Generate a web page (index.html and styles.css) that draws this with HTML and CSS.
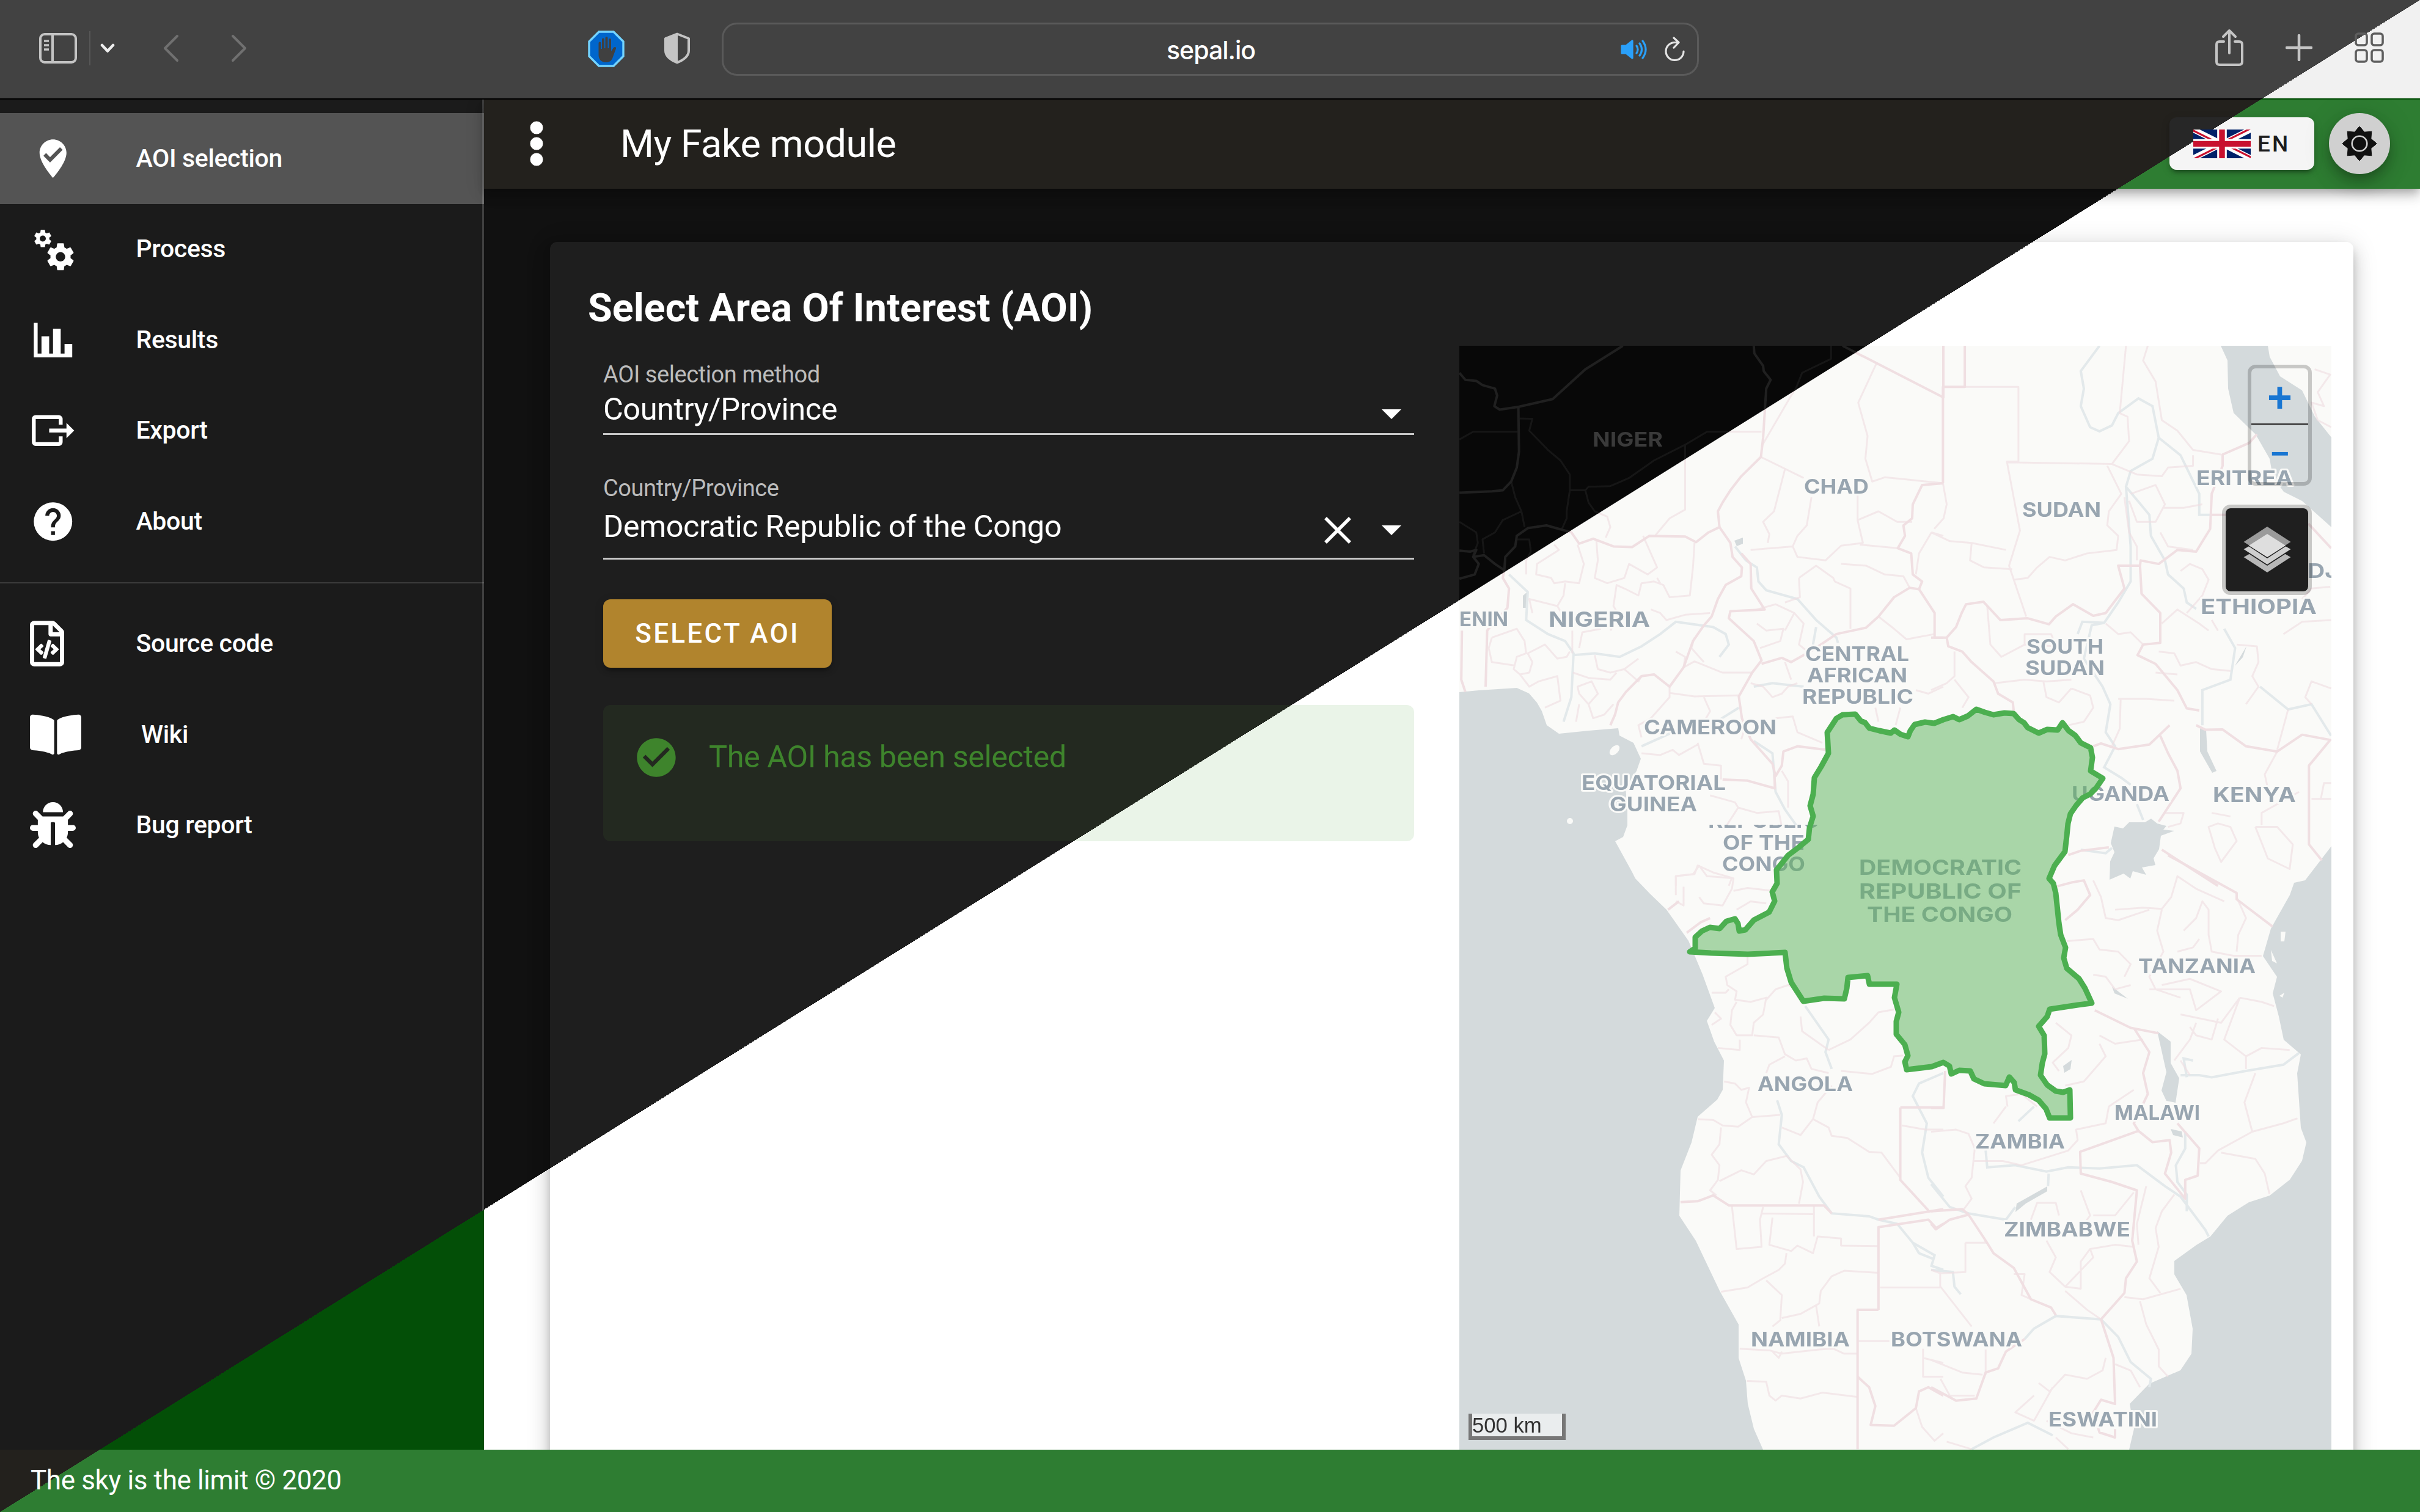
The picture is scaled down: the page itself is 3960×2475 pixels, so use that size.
FILE: index.html
```html
<!DOCTYPE html>
<html lang="en">
<head>
<meta charset="utf-8">
<title>My Fake module</title>
<link rel="stylesheet" href="styles.css">
</head>
<body>
<header class="browser">
  <div class="browser-side browser-left">
    <svg class="ico-sidebar" width="62" height="50" viewBox="0 0 62 50" fill="none" stroke="#c4c4c4" stroke-width="4"><rect x="2" y="2" width="58" height="46" rx="7"/><path d="M22 2V48"/><path d="M8 13H16M8 20H16M8 27H16" stroke-width="3.4"/></svg>
    <span class="vline"></span>
    <svg class="ico-chevron" width="24" height="16" viewBox="0 0 24 16" fill="none" stroke="#eee" stroke-width="4.5" stroke-linecap="round" stroke-linejoin="round"><path d="M3 3L12 12.5L21 3"/></svg>
    <svg class="ico-back" width="28" height="46" viewBox="0 0 28 46" fill="none" stroke="#707070" stroke-width="4" stroke-linecap="round" stroke-linejoin="round"><path d="M24 3L4 23L24 43"/></svg>
    <svg class="ico-forward" width="28" height="46" viewBox="0 0 28 46" fill="none" stroke="#707070" stroke-width="4" stroke-linecap="round" stroke-linejoin="round"><path d="M4 3L24 23L4 43"/></svg>
    <svg class="ico-stop" width="60" height="60" viewBox="0 0 60 60"><path d="M18 2H42L58 18V42L42 58H18L2 42V18Z" fill="#0066cc" stroke="#74d4ff" stroke-width="3.4"/><path d="M17.5 40V20.5a2 2 0 0 1 4 0V30h1.500V14.500a2 2 0 0 1 4 0V29h1.500V12a2 2 0 0 1 4 0V29H34V15a2 2 0 0 1 4 0V34l4-6c2-2 5-1 4 1.500L41 43c-2 7-6 9-12 9-7 0-11.500-5-11.500-12Z" fill="#404040"/></svg>
    <svg class="ico-shield" width="44" height="52" viewBox="0 0 44 52"><path d="M22 2.500L41 10V30C41 39 33 45 22 49.500C11 45 3 39 3 30V10Z" fill="none" stroke="#c4c4c4" stroke-width="4" stroke-linejoin="round"/><path d="M23 2L3 10V30C3 39 11 45 23 50Z" fill="#c4c4c4"/></svg>
  </div>
  <div class="url">
    <span class="url-text">sepal.io</span>
    <span class="url-icons">
      <svg width="44" height="36" viewBox="0 0 44 36" fill="none" stroke="#2aa0fa" stroke-width="3.2" stroke-linecap="round"><path d="M3 12H10L20 4V32L10 24H3Z" fill="#2aa0fa" stroke-linejoin="round"/><path d="M27 12q4 6 0 12M32 8q7 10 0 20M37 4q10 14 0 28"/></svg>
      <svg width="34" height="42" viewBox="0 0 34 42" fill="none" stroke="#e4e4e4" stroke-width="3.2" stroke-linecap="round" stroke-linejoin="round"><path d="M31 24A14.500 14.500 0 1 1 17 9.500H22M15 2L23 9.500L15 18"/></svg>
    </span>
  </div>
  <div class="browser-side browser-right">
    <svg width="46" height="62" viewBox="0 0 46 62" fill="none" stroke="#c4c4c4" stroke-width="4" stroke-linecap="round" stroke-linejoin="round"><path d="M14 21H7Q2 21 2 26V54Q2 59 7 59H39Q44 59 44 54V26Q44 21 39 21H32M23 40V4M13 13L23 3L33 13"/></svg>
    <svg width="44" height="44" viewBox="0 0 44 44" stroke="#c4c4c4" stroke-width="4.5" stroke-linecap="round"><path d="M22 2V42M2 22H42"/></svg>
    <svg width="48" height="50" viewBox="0 0 48 50" fill="none" stroke-width="3.6"><defs><clipPath id="grid-dark"><path d="M-200 153.500L108 -54V-400H-400Z" transform="translate(-55 0)"/></clipPath><g id="grid-ico"><rect x="2" y="2" width="18" height="19" rx="4"/><rect x="28" y="2" width="18" height="19" rx="4"/><rect x="2" y="29" width="18" height="19" rx="4"/><rect x="28" y="29" width="18" height="19" rx="4"/></g></defs><use href="#grid-ico" stroke="#5e5e5e"/><use href="#grid-ico" stroke="#c4c4c4" clip-path="url(#grid-dark)"/></svg>
  </div>
</header>

<nav class="drawer">
  <ul class="nav-list">
    <li class="nav-item active"><svg class="mdi" viewBox="0 0 24 24"><path d="M12,2C15.860,2 19,5.140 19,9C19,14.250 12,22 12,22C12,22 5,14.250 5,9C5,5.140 8.140,2 12,2M10.470,14L17,7.410L15.600,6L10.470,11.180L8.400,9.090L7,10.500L10.470,14Z"/></svg><span>AOI selection</span></li>
    <li class="nav-item"><svg class="mdi" viewBox="0 0 24 24"><path d="M15.900,18.450C17.250,18.450 18.350,17.350 18.350,16C18.350,14.650 17.250,13.550 15.900,13.550C14.540,13.550 13.450,14.650 13.450,16C13.450,17.350 14.540,18.450 15.900,18.450M21.100,16.680L22.580,17.840C22.710,17.950 22.750,18.130 22.660,18.290L21.260,20.710C21.170,20.860 21,20.920 20.830,20.860L19.090,20.160C18.730,20.440 18.330,20.670 17.910,20.850L17.640,22.700C17.620,22.870 17.470,23 17.300,23H14.500C14.320,23 14.180,22.870 14.150,22.700L13.890,20.850C13.460,20.670 13.070,20.440 12.710,20.160L10.960,20.860C10.810,20.920 10.620,20.860 10.540,20.710L9.140,18.290C9.050,18.130 9.090,17.950 9.220,17.840L10.700,16.680L10.650,16L10.700,15.310L9.220,14.160C9.090,14.050 9.050,13.860 9.140,13.710L10.540,11.290C10.620,11.130 10.810,11.070 10.960,11.130L12.710,11.840C13.070,11.560 13.460,11.320 13.890,11.150L14.150,9.290C14.180,9.130 14.320,9 14.500,9H17.300C17.470,9 17.620,9.130 17.640,9.290L17.910,11.150C18.330,11.320 18.730,11.560 19.090,11.840L20.830,11.130C21,11.070 21.170,11.130 21.260,11.290L22.660,13.710C22.750,13.860 22.710,14.050 22.580,14.160L21.100,15.310L21.150,16L21.100,16.680M6.690,8.070C7.560,8.070 8.260,7.370 8.260,6.500C8.260,5.630 7.560,4.920 6.690,4.920A1.580,1.580 0 0,0 5.110,6.500C5.110,7.370 5.820,8.070 6.690,8.070M10.030,6.940L11,7.680C11.070,7.750 11.090,7.870 11.030,7.970L10.130,9.530C10.080,9.630 9.960,9.670 9.860,9.630L8.740,9.180L8,9.620L7.810,10.810C7.790,10.920 7.700,11 7.590,11H5.790C5.670,11 5.580,10.920 5.560,10.810L5.400,9.620L4.640,9.180L3.520,9.630C3.410,9.670 3.300,9.630 3.240,9.530L2.340,7.970C2.280,7.870 2.310,7.750 2.390,7.680L3.340,6.940L3.310,6.500L3.340,6.060L2.390,5.320C2.310,5.250 2.280,5.130 2.340,5.030L3.240,3.470C3.300,3.370 3.410,3.330 3.520,3.380L4.630,3.820L5.400,3.380L5.560,2.190C5.580,2.080 5.670,2 5.790,2H7.590C7.700,2 7.790,2.080 7.810,2.190L8,3.380L8.740,3.820L9.860,3.380C9.960,3.330 10.080,3.370 10.130,3.470L11.030,5.030C11.090,5.130 11.070,5.250 11,5.320L10.030,6.060L10.060,6.500L10.030,6.940Z"/></svg><span>Process</span></li>
    <li class="nav-item"><svg class="mdi" viewBox="0 0 24 24"><path d="M22,21H2V3H4V19H6V10H10V19H12V6H16V19H18V14H22V21Z"/></svg><span>Results</span></li>
    <li class="nav-item"><svg class="mdi" viewBox="0 0 24 24"><path d="M23,12L19,8V11H10V13H19V16M1,18V6C1,4.890 1.900,4 3,4H15A2,2 0 0,1 17,6V9H15V6H3V18H15V15H17V18A2,2 0 0,1 15,20H3A2,2 0 0,1 1,18Z"/></svg><span>Export</span></li>
    <li class="nav-item"><svg class="mdi" viewBox="0 0 24 24"><path d="M15.070,11.250L14.170,12.170C13.450,12.890 13,13.500 13,15H11V14.500C11,13.390 11.450,12.390 12.170,11.670L13.410,10.410C13.780,10.050 14,9.550 14,9C14,7.890 13.100,7 12,7A2,2 0 0,0 10,9H8A4,4 0 0,1 12,5A4,4 0 0,1 16,9C16,9.880 15.640,10.670 15.070,11.250M13,19H11V17H13M12,2A10,10 0 0,0 2,12A10,10 0 0,0 12,22A10,10 0 0,0 22,12C22,6.470 17.500,2 12,2Z"/></svg><span>About</span></li>
  </ul>
  <ul class="nav-list nav-links">
    <li class="nav-item"><span class="fa-slot"><svg class="fa" width="56" height="75" viewBox="0 0 384 512"><path d="M149.900 349.100l-.2-.2-32.800-28.900 32.800-28.900c3.600-3.200 4-8.800.8-12.400l-.2-.2-17.400-18.600c-3.400-3.600-9-3.700-12.400-.4l-57.700 54.100c-3.700 3.500-3.700 9.400 0 12.800l57.700 54.100c1.600 1.500 3.800 2.400 6 2.400 2.400 0 4.800-1 6.400-2.800l17.400-18.600c3.300-3.500 3.100-9.100-.4-12.400zm220-251.200L286 14C277 5 264.800-.1 252.100-.1H48C21.500 0 0 21.500 0 48v416c0 26.500 21.500 48 48 48h288c26.500 0 48-21.500 48-48V131.900c0-12.700-5.100-25-14.100-34zM256 51.900l76.100 76.100H256zM336 464H48V48h160v104c0 13.300 10.700 24 24 24h104zM209.600 214c-4.700-1.400-9.500 1.300-10.900 6L144 408.100c-1.400 4.700 1.300 9.600 6 10.900l24.400 7.100c4.700 1.400 9.600-1.400 10.900-6L240 231.900c1.400-4.700-1.300-9.600-6-10.900zm24.500 76.900l.2.2 32.800 28.900-32.800 28.900c-3.600 3.200-4 8.800-.8 12.400l.2.2 17.400 18.600c3.300 3.500 8.900 3.700 12.400.4l57.700-54.100c3.700-3.500 3.700-9.400 0-12.800l-57.700-54.100c-3.500-3.300-9.100-3.200-12.400.4l-17.400 18.600c-3.300 3.500-3.100 9.100.4 12.400z"/></svg></span><span>Source code</span></li>
    <li class="nav-item"><span class="fa-slot"><svg class="fa" width="84" height="75" viewBox="0 0 576 512"><path d="M542.220 32.050c-54.800 3.110-163.720 14.430-230.960 55.590-4.640 2.840-7.270 7.890-7.270 13.170v363.870c0 11.550 12.630 18.850 23.280 13.490 69.180-34.820 169.230-44.320 218.700-46.920 16.890-.89 30.020-14.430 30.020-30.660V62.750c.01-17.710-15.350-31.740-33.770-30.700zM264.730 87.640C197.500 46.480 88.580 35.170 33.780 32.050 15.360 31.010 0 45.040 0 62.750V400.600c0 16.240 13.130 29.780 30.020 30.660 49.490 2.600 149.590 12.110 218.770 46.950 10.620 5.350 23.210-1.940 23.210-13.460V100.630c0-5.290-2.620-10.140-7.270-12.990z"/></svg></span><span>Wiki</span></li>
    <li class="nav-item"><span class="fa-slot"><svg class="fa" width="75" height="75" viewBox="0 0 512 512"><path d="M511.988 288.900c-.478 17.430-15.217 31.100-32.653 31.100H424v16c0 21.864-4.882 42.584-13.600 61.145l60.228 60.228c12.496 12.497 12.496 32.758 0 45.255-12.498 12.497-32.759 12.496-45.256 0l-54.736-54.736C345.886 467.965 314.351 480 280 480V236c0-6.627-5.373-12-12-12h-24c-6.627 0-12 5.373-12 12v244c-34.351 0-65.886-12.035-90.636-32.108l-54.736 54.736c-12.498 12.497-32.759 12.496-45.256 0-12.496-12.497-12.496-32.758 0-45.255l60.228-60.228C92.882 378.584 88 357.864 88 336v-16H32.666C15.230 320 .491 306.330.013 288.900-.484 270.816 14.028 256 32 256h56v-58.745l-46.628-46.628c-12.496-12.497-12.496-32.758 0-45.255 12.498-12.497 32.758-12.497 45.256 0L141.255 160h229.489l54.627-54.627c12.498-12.497 32.758-12.497 45.256 0 12.496 12.497 12.496 32.758 0 45.255L424 197.255V256h56c17.972 0 32.484 14.816 31.988 32.900zM257 0c-61.856 0-112 50.144-112 112h224C369 50.144 318.856 0 257 0z"/></svg></span><span>Bug report</span></li>
  </ul>
</nav>

<div class="appbar">
  <svg class="dots" width="76" height="76" viewBox="0 0 76 76" fill="#fff"><circle cx="38" cy="12" r="10.5"/><circle cx="38" cy="38" r="10.5"/><circle cx="38" cy="64" r="10.5"/></svg>
  <h1 class="app-title">My Fake module</h1>
  <div class="lang">
    <svg width="94" height="47" viewBox="0 0 60 30"><defs><clipPath id="flag-t"><path d="M30,15H60V30ZV30H0ZH0V0ZV0H60Z"/></clipPath></defs><path d="M0,0V30H60V0Z" fill="#012169"/><path d="M0,0L60,30M60,0L0,30" stroke="#fff" stroke-width="6"/><path d="M0,0L60,30M60,0L0,30" clip-path="url(#flag-t)" stroke="#c8102e" stroke-width="4"/><path d="M30,0V30M0,15H60" stroke="#fff" stroke-width="10"/><path d="M30,0V30M0,15H60" stroke="#c8102e" stroke-width="6"/></svg>
    <span class="lang-text">EN</span>
  </div>
  <button class="theme" aria-label="Theme"><svg width="58" height="58" viewBox="-29 -29 58 58"><path d="M0-28Q1.500-27 7.800-18.800L19.800-19.800L18.800-7.800Q27-1.500 28 0Q27 1.500 18.800 7.800L19.800 19.800L7.800 18.800Q1.500 27 0 28Q-1.500 27-7.800 18.800L-19.800 19.800L-18.800 7.800Q-27 1.500-28 0Q-27-1.500-18.800-7.800L-19.800-19.800L-7.800-18.800Q-1.500-27 0-28Z" fill="#111" stroke="#111" stroke-linejoin="round"/><circle r="12.3" fill="none" stroke="#d0d0d0" stroke-width="2.6"/></svg></button>
</div>

<main class="content">
  <section class="card">
    <h2 class="card-title">Select Area Of Interest (AOI)</h2>
    <div class="card-body">
      <div class="form">
        <div class="field">
          <label class="field-label">AOI selection method</label>
          <div class="field-row row-a"><span class="field-value">Country/Province</span><svg class="caret" width="32" height="16" viewBox="0 0 32 16"><path d="M0 0H32L16 16Z" fill="#fff"/></svg></div>
        </div>
        <div class="field field-b">
          <label class="field-label">Country/Province</label>
          <div class="field-row row-b"><span class="field-value">Democratic Republic of the Congo</span><svg class="clear" width="44" height="44" viewBox="0 0 44 44" stroke="#fff" stroke-width="5.5"><path d="M2 2L42 42M42 2L2 42"/></svg><svg class="caret" width="32" height="16" viewBox="0 0 32 16"><path d="M0 0H32L16 16Z" fill="#fff"/></svg></div>
        </div>
        <button class="select-btn">SELECT AOI</button>
        <div class="alert"><svg width="76" height="76" viewBox="0 0 24 24" fill="#3e842c"><path d="M12 2C6.500 2 2 6.500 2 12S6.500 22 12 22 22 17.500 22 12 17.500 2 12 2M10 17L5 12L6.410 10.590L10 14.170L17.590 6.580L19 8L10 17Z"/></svg><span class="alert-text">The AOI has been selected</span></div>
      </div>
      <div class="map">
        <svg class="map-svg" viewBox="2388 566 1427 1807" width="1427" height="1807">
          <defs>
            <clipPath id="dark-half"><path d="M3960 0H0V2475Z"/></clipPath>
            <clipPath id="tile-edge"><path d="M2780 1350H3000V1370H2780Z"/></clipPath>
            <g id="borders" fill="none" stroke-linejoin="round">
              <g class="country">
                <g transform="translate(2380 550) scale(.5102 .574)">
                  <path d="M16 105L35 125L70 128L90 140L130 150L137 170L128 200L145 210L205 202L315 180L420 95L540 28"/>
                  <path d="M205 202L207 330L200 375L182 415L155 440L120 443L16 447"/>
                  <path d="M960 28L962 50L990 85L992 100L1014 125L1000 150L990 290L983 345L920 400L885 440L860 475L845 500L850 545L815 560L775 588L740 572L625 570L570 602L510 600L445 578L400 592L375 560L335 550L295 540L235 548L200 570L195 600L163 630L160 668L130 650L95 625L60 630L70 610L50 615L16 612M60 630L78 650L65 680L16 692"/>
                  <path d="M160 668L155 690L175 720L170 775L150 795M140 800L105 840L100 1000M24 840L22 980L35 1015"/>
                  <path d="M850 545L885 590L892 630L922 660L920 685L870 710L845 750L825 800L800 825L765 870L735 945L690 1000L640 965L600 970L550 1015L525 1045L515 1080L500 1110"/>
                  <path d="M920 620L950 650L952 720L995 780L885 785L880 805L960 870L985 925L955 960L912 1028L922 1090L950 1150L1020 1220L1030 1255L1050 1225L1055 1185L1100 1170L1190 1180"/>
                  <path d="M985 935L1050 918L1080 930L1150 895L1225 850L1320 832L1360 800L1410 745L1460 718L1490 722L1540 790L1540 860L1568 860M1490 722L1500 700L1470 680L1465 620L1422 605L1445 570L1440 540L1468 520L1470 480L1500 425L1568 420"/>
                  <path d="M1245 28L1568 175L1568 28M860 1265L940 1268L1028 1290L1026 1250"/>
                </g>
                <g transform="translate(3160 550) scale(.5102 .574)">
                  <path d="M108 28V145H38V420M0 860H50L80 830L98 790L112 765L168 758L222 810L310 805M50 860L55 885L100 900L130 930L200 985L215 1020L262 1045L265 1070M310 805L378 822L400 800L455 765L520 798L560 790L620 720L600 655H670L675 735L735 790V875L680 880L662 910L720 935L790 1010L820 1062L860 1068"/>
                  <path d="M670 655L672 640L730 650L790 610L850 615L895 550L900 450L935 370L935 338L1020 305L1045 280M895 510H960M735 840V875M850 1110L880 1123L935 1122L1010 1170L1110 1185L1190 1137L1280 1152L1212 1225V1450L1253 1495M520 1170L545 1162L600 1178L700 1165L765 1110M735 1140L760 1190L790 1240L800 1290L730 1385M740 1465L920 1568M440 1480L480 1468L570 1458M1283 605L1210 535"/>
                </g>
                <g transform="translate(2380 1400) scale(.5102 .6856)">
                  <path d="M725 828L780 826L830 812L880 836H1185L1210 855M1360 1085V888L1520 870L1545 890L1568 880M1360 870L1568 845M1360 1085H1293V1418M1293 1245L1330 1270L1350 1315L1335 1360L1410 1362L1480 1320L1490 1280L1520 1270L1568 1290M1430 602V775L1520 848M1430 602H1568M745 185L790 160L820 150M685 130L720 110"/>
                </g>
                <g transform="translate(3160 1400) scale(.5102 .6856)">
                  <path d="M0 603H40L45 515M0 850L100 845L120 858L175 920L200 950L265 985L320 1060L385 1080L400 1098M0 880L15 893L60 870L120 858M545 1108L620 1045L625 1010L660 970L645 920L660 800L580 780L480 760L478 708L665 658L710 685L765 680L770 710L750 760L815 820V775L855 765L860 700L790 640M545 1108L585 1200L590 1310L545 1300L520 1330L540 1378L590 1390V1370M525 370L640 412L730 425M650 412L700 470L680 520L695 570L650 640L665 658M760 0L980 90V105L1095 170M0 1270L80 1302L145 1297L175 1235L215 1225L240 1185L300 1155M430 155L470 130L510 95L490 60L450 65L400 75"/>
                </g>
              </g>
              <g class="province">
                <g transform="translate(2380 550) scale(.5102 .574)">
                  <path d="M16 295L60 273H203M207 235L250 236L240 270L300 325L340 355L370 395V440L360 500V520L345 550M370 440H420L430 430L500 428L560 405L640 355L740 310L810 273H985M420 440L430 475L450 500L490 515L500 545L485 575M740 310V495L690 520L645 568M182 415L195 460L215 500L225 545M215 500L155 525L130 560L90 580L95 620M16 530L70 560L75 590L60 625M200 580H240L245 615L230 640V680M1208 28V65L1115 105L1095 150L1080 170L985 315M1355 75L1295 190L1325 285L1318 350L1340 415L1380 403L1440 408L1568 420M983 345L1120 405M1060 380L1025 500L990 530L1010 565L1005 590M1145 460L1130 540L1100 570L1085 600L950 610M1293 455V525L1360 500L1420 530L1468 530M1293 525L1310 590L1240 598L1190 640L1100 630L1085 600M1300 595L1420 605"/>
                  <path d="M320 595L335 610L265 650L262 680L310 690L320 705L355 700L400 705L415 650L395 595M455 580L460 640L450 690L490 705L545 690L560 650L620 680L650 660L620 600L605 570M770 590L765 660L755 740L690 745L670 710L640 700L600 705L590 740L545 720L520 710L510 770L530 800L500 840M355 705L350 740L330 770L350 800L370 790M250 790L240 750L330 770M650 690L660 705M630 780L660 790L680 810L740 795L820 790M120 860L200 835L225 870L230 905L200 915L190 950L210 965L240 960L250 930L235 905L290 880L330 920L360 915L370 900M120 860L110 890L120 930L195 940M378 840V905M400 890L410 845L470 835M450 910L460 950L500 960L545 950L590 920M545 950L590 985L600 970M710 900L740 915L735 945M210 965L240 1000L270 985L330 970L340 1040L290 1060M380 960L430 975L500 980L520 960M395 1000L440 985L460 1020L430 1050L400 1020ZM400 1050L390 1100M430 1050L445 1090L480 1080L510 1050M690 1000V1030L630 1090L590 1110L600 1145M690 1018L770 1028L912 1025M800 1030L820 1070L800 1100M735 945L770 928L860 960L955 960M770 860L760 890L800 930M600 1190L660 1195L700 1180L720 1195L780 1165M780 1160L800 1220L855 1225V1265"/>
                  <path d="M970 780L1030 765L1090 790L1120 820L1105 880L1140 905M1105 690L1108 745L1060 760M1105 690L1160 655L1215 690L1220 700L1270 720V835M1240 650L1320 655L1380 680L1440 685L1460 718M970 820L1000 840L1055 835L1045 870L980 890M1090 790L1060 840M1360 800L1410 835L1450 865L1540 850M950 990L990 1000L1020 1030L1050 1020L1070 1000L1100 990M1060 930L1080 980M940 1095L920 1150M1030 1090L1085 1085L1100 1130L1180 1160M1050 1240L1070 1270V1345M820 1310L860 1320L900 1330L910 1345L870 1400M910 1345L970 1360L1040 1355L1050 1400M710 1568V1540L770 1535L780 1510L830 1530L890 1545L880 1568M1360 1100L1350 1060M1415 1110L1430 1060M1480 1010L1520 1020L1568 1000M1530 560L1490 620L1480 680M1530 560L1568 570"/>
                </g>
                <g transform="translate(3160 550) scale(.5102 .574)">
                  <path d="M108 145H280V358H243L285 555L250 655L305 800M243 360L580 365L635 300L630 230L605 220L625 28M565 370L610 450L570 500L565 540L600 570L595 610L500 620L430 640L380 630L340 660L310 690L265 695M0 560L60 585L130 590L240 610M38 420L50 480L40 520L10 550M130 590L125 640L170 660L260 665M695 28L680 70L720 130L740 240L790 270L840 325L930 338M840 340V370L760 375L740 400L660 395L580 365M640 450L720 425L750 480L720 530H660L635 470M745 490L810 490L870 480M735 560L760 600L840 610M620 460L635 560L660 600V640M800 670L830 650L870 665L890 695L870 740L820 790M740 820L790 780L860 820L890 840M900 810L920 840M1280 715L1220 720L1190 750M1130 850L1190 815L1283 810M730 900L780 905L800 940L850 930L900 950L960 955M720 960L790 965M980 880L1045 885L1050 930L1030 970L1050 1000L1010 1050M1283 1005L1220 985L1200 1030L1220 1050M1145 1065L1110 1180M1110 1185L1070 1250L1080 1290M600 1035H690L780 1040M608 1035L605 1120L580 1170M450 1005L510 1025L520 1060L490 1100L440 1110M205 990L300 980L370 985L450 980M360 985L370 1030L410 1045L450 1005M180 770L190 880L225 915L300 880L400 885L385 850L300 850V880M560 820L600 850L640 845L680 880M0 1010L50 990L75 970V900M75 980L120 1030L100 1060M1040 1400L1080 1490L1150 1520L1160 1450L1110 1400H1040M1060 1395V1360L1120 1330L1180 1300M1220 1320H1283M1250 1320L1260 1275H1283M890 1400L910 1460L930 1500L980 1440L960 1400L920 1390ZM750 1360L810 1360L800 1390L760 1400M900 1360L960 1370M1230 95L1280 110L1240 160L1260 200L1220 190L1240 240L1283 260"/>
                </g>
                <g transform="translate(2380 1400) scale(.5102 .6856)">
                  <path d="M940 240L940 260L870 290L875 310L905 325L900 345L950 350L1000 340L990 380L960 400L955 430L905 430L885 405L890 370L905 350M825 328H870L880 320M835 375L855 390L825 405M1000 345L1030 320L1070 310L1090 315M960 430L1040 435L1060 475L1095 490L1130 485L1145 510L1200 520M845 460L915 465V440M1060 480L1010 500L1000 520M865 540L900 545L920 560L945 555L935 590L955 625L1045 620M780 630L830 632L860 645L910 648L955 625M855 650L850 690L825 715L850 740L845 775L820 800L840 812M850 778L920 752L960 762L1000 730L1065 718L1110 750L1118 780L1105 832M1050 650L1110 668L1150 630L1165 590L1210 550M1150 630L1200 650L1210 670L1260 675L1330 708L1370 710L1430 770M1200 465L1270 440L1330 400L1360 375L1412 368M1110 385L1115 420L1200 465M1240 515L1340 522L1400 505L1410 480L1440 478M1435 645L1510 655L1568 655M890 838L905 940L985 935L980 870L990 840M985 855L1150 857M1020 865L1010 930L1080 945L1100 932L1150 950L1165 910L1240 915V932L1360 933M1153 838V910M1065 950L1060 975L1040 990L990 1010L940 1032L855 1042M1000 1015L1050 1050L1045 1110L1020 1125M1050 1105L1110 1095L1170 1070L1175 1040L1210 1005L1250 992L1360 997M1160 1075L1170 1125M1365 1032H1558V995M915 1178L1010 1182L1050 1190L1170 1180L1215 1178L1250 1190H1290M938 1255L1000 1257L1010 1290L1030 1302L1050 1290L1110 1297L1180 1283L1290 1293M1295 1160H1395M1503 1178V1245H1568M1503 1200L1568 1212M1480 1320L1500 1365L1540 1398L1568 1380M710 95V50L765 45L785 25L810 50L850 52L895 55L890 80L860 120L800 115L785 100M735 75V120L710 110M895 85L940 78L1020 85M905 130L950 110L1000 115M1020 1185L1040 1200L1050 1185"/>
                </g>
                <g transform="translate(3160 1400) scale(.5102 .6856)">
                  <path d="M0 660L80 655L120 665L140 700L130 770L110 790L130 820L105 845M135 730H230L290 740L440 705L470 680L465 655L560 640L570 600L650 560M245 600L240 575L290 570L340 600M110 925H180L170 920M110 925V995L30 998L0 990M30 1030L130 1125M520 285L560 290L590 320L640 310M435 205L520 200L540 225L600 230L640 260L620 290M520 60L545 100L560 150L600 155L700 130M590 130L680 125L740 128L770 100L790 50L850 80L940 110M740 130L725 180L745 230L700 290L720 320L800 340M810 180L850 150L870 110L890 130L890 190L900 230L970 240L1060 240M980 100L1010 150L985 190L980 230M860 200L840 220L790 230M700 320H830L850 370L930 325L830 295L740 310M990 340L1060 350L1100 360M990 340L940 440L1010 480L1060 460L1150 465M1010 480V510M780 490L830 440L850 400M920 390L900 440L850 430L830 410M800 380L930 400L990 340M540 430L590 450L680 440M540 450L560 480L490 540L430 550M400 400L450 430L440 460L390 495L410 515M1040 520L1005 590L1030 660L920 705L880 735H862M1030 660L1130 640L1175 628M930 710L1040 725L1070 760L1085 808M780 810L740 850L720 890L730 935L700 1010L735 1045M690 790L660 880L665 930M800 1035L680 1060L620 1055M670 1065L690 1120L730 1180V1220L760 1245M510 940L520 960L430 1030M370 920L400 960L380 995L430 1030L480 1035V970L510 940L590 930L650 935M430 1040L500 1085L545 1108M480 800L510 860L490 880M520 860L590 860L650 805M320 870L340 830L400 830L410 860M265 1000H300L290 1050L320 1060M0 1205L100 1235L165 1240M30 1250L60 1290L140 1290M345 1260L380 1280L430 1240L500 1250L550 1230L560 1200M330 1290L270 1330L330 1350L390 1270M370 1350L450 1380L520 1390M590 1215L640 1230L670 1270M800 490L830 525M240 600L200 640M50 1400L130 1418M400 1390L440 1418M175 1180V1240"/>
                </g>
              </g>
            </g>
            <g id="drc-shape"><path d="M3005 1176L3015 1170L3036 1169L3045 1180L3052 1183L3059 1192L3075 1196L3094 1200L3100 1195L3110 1202L3122 1206L3126 1196L3133 1186L3150 1182L3165 1184L3180 1178L3196 1173L3206 1178L3220 1172L3234 1161L3248 1166L3262 1170L3280 1167L3295 1168L3304 1178L3312 1183L3318 1191L3336 1200L3350 1194L3367 1195L3375 1183L3385 1196L3396 1204L3405 1216L3421 1224L3424 1240L3421 1262L3441 1274L3430 1290L3420 1300L3408 1306L3397 1319L3388 1332L3384 1348L3382 1368L3379 1394L3362 1417L3353 1438L3360 1446L3364 1462L3369 1510L3372 1530L3380 1551L3377 1568L3382 1585L3402 1602L3412 1618L3423 1642L3400 1645L3354 1652L3350 1664L3336 1680L3345 1695L3346 1725L3342 1740L3339 1760L3350 1776L3364 1786L3376 1788L3387 1784L3388 1830L3354 1830L3348 1815L3336 1801L3320 1792L3298 1784L3296 1772L3288 1763L3282 1777L3247 1774L3230 1766L3224 1753L3206 1752L3193 1758L3190 1745L3180 1739L3161 1746L3120 1751L3117 1738L3122 1728L3117 1710L3103 1693L3103 1672L3107 1657L3100 1633L3104 1611L3059 1611L3056 1597L3024 1600L3022 1618L3018 1635L2985 1634L2951 1639L2940 1622L2931 1608L2924 1585L2921 1559L2860 1562L2800 1560L2765 1558L2774 1552L2774 1534L2785 1524L2798 1518L2814 1520L2825 1508L2839 1504L2844 1512L2846 1524L2856 1522L2870 1506L2895 1493L2904 1475L2900 1460L2908 1446L2907 1424L2926 1400L2942 1388L2959 1374L2961 1355L2967 1336L2962 1319L2967 1300L2969 1273L2980 1255L2992 1233L2990 1199Z"/></g>
          </defs>
          <rect x="2388" y="566" width="1427" height="1807" fill="#fafaf8"/>
          <g class="water">
            <path d="M2388 1133L2420 1130L2482 1126L2502 1135L2515 1150L2523 1164L2531 1187L2551 1201L2600 1196L2648 1192L2650 1204L2673 1216L2685 1242L2678 1262L2660 1290L2663 1320L2663 1351L2656 1370L2643 1377L2671 1428L2676 1438L2700 1463L2727 1489L2763 1540L2786 1595L2806 1650L2793 1671L2805 1705L2821 1736L2819 1784L2810 1800L2778 1828L2768 1870L2750 1916L2748 1990L2775 2031L2814 2113L2845 2168V2223L2857 2260L2860 2298L2870 2339L2885 2373H2388Z"/>
            <path d="M3484 2373L3492 2339L3485 2298L3517 2265L3568 2243L3586 2216L3588 2175L3578 2120L3558 2086V2064L3594 2038L3617 2024L3645 1990L3680 1968L3714 1957L3747 1931L3767 1900L3774 1870L3765 1846L3759 1757L3765 1726L3737 1702L3729 1664L3719 1626L3726 1599L3703 1565L3716 1520L3747 1465L3754 1445L3772 1441L3815 1385V2373Z"/>
            <path d="M3634 566L3645 590L3646 636L3655 676L3691 711L3714 751L3719 780L3737 805L3767 820L3815 863V716L3788 682L3767 639L3731 616L3714 584L3711 566Z"/>
            <path d="M3460 1353L3474 1356L3484 1346L3510 1346L3520 1340L3530 1348L3545 1352L3540 1358L3558 1360L3536 1368L3533 1390L3524 1405L3527 1416L3505 1420L3512 1432L3490 1426L3486 1438L3475 1430L3452 1440L3453 1410L3460 1395L3454 1380Z"/>
            <path d="M3530 1688L3552 1705L3552 1740L3566 1765L3560 1805L3545 1802L3537 1785L3545 1755Z"/>
            <path d="M3600 1190L3610 1195L3612 1230L3627 1262L3620 1265L3600 1230Z"/>
            <path d="M2838 885L2852 880L2852 890L2842 894ZM3376 1745L3390 1735L3388 1750L3378 1756ZM3300 1970L3350 1942V1950L3315 1970L3298 1984ZM3552 1848L3570 1852L3572 1862L3556 1858ZM3456 1615L3482 1635L3460 1626ZM3657 1090L3676 1058L3670 1076ZM2492 975L2498 970V995H2492Z"/>
          </g>
          <g fill="#fafaf8"><ellipse cx="2642" cy="1228" rx="10" ry="6" transform="rotate(-45 2642 1228)"/><circle cx="2569" cy="1344" r="5"/><path d="M3732 1525h8l-2 16h-6zM3716 1555l10 22-8-4zM3730 1630l8-5-3 8z"/></g>
          <g class="rivers" fill="none">
            <g transform="translate(2380 550) scale(.5102 .574)"><path d="M175 680L235 730L230 810L300 850L355 870L382 905L375 1030L350 1100M382 910L450 905L530 915L600 885L660 850L710 815L830 830L870 850L880 880L850 915M900 600L935 640L970 660L975 700L1000 725L1100 750L1160 810L1225 860L1230 875M1160 830L1150 880M600 1170L700 1130M912 1060L840 1100M960 1000L1020 990L1120 1000M960 1155L1020 1190L1030 1300L1060 1350L1100 1400"/></g>
            <g transform="translate(3160 550) scale(.5102 .574)"><path d="M540 28L480 100L490 150L480 200L510 260L540 272L580 255L600 220L665 178L710 200L730 290L710 350L640 385L625 430L640 600V700L600 760L555 818L485 815L470 850M625 430L700 510L705 570L750 640L760 680L810 720L820 760L850 778M730 290L800 340L860 450V510H895M555 818L515 825L490 920L550 1000L575 1050L560 1130L590 1170L555 1230L610 1260L640 1280M940 835L975 890L960 980L870 1010V1110M1055 1000L1145 1065L1220 1050L1283 1140M660 1335L680 1380M480 1465L560 1475L580 1460"/></g>
            <g transform="translate(2380 1400) scale(.5102 .6856)"><path d="M1125 360L1200 440L1190 470L1210 510M1035 585L1050 620L1040 690L1080 730L1120 745L1170 815L1210 855L1330 862L1360 870L1420 880L1470 925L1540 955L1530 980L1568 990M1470 925L1490 950L1540 965M1568 520L1490 545L1470 575L1515 640L1500 710L1520 770L1568 815"/></g>
            <g transform="translate(3160 1400) scale(.5102 .6856)"><path d="M175 705L180 745L270 740L370 755L440 745L540 748L660 740L750 790L800 815L880 895L890 910M377 760L375 790M0 785L60 840L120 855L240 870L270 840M815 660V700L785 740L790 780L820 810V850M300 1155L330 1130L400 1100L545 1108L600 1150L640 1210L705 1250L700 1270M130 1418L200 1390L310 1355L390 1385M330 600L280 635M0 990L70 995L75 1030L95 1048M800 525L860 525L900 530L1010 515L1130 500L1180 472M820 530L810 485L840 490"/></g>
          </g>
          <use href="#borders" class="lines-light"/>
          <g class="map-labels halo">
            <text x="2952" y="808" textLength="106" lengthAdjust="spacingAndGlyphs">CHAD</text>
            <text x="2388" y="1025" textLength="80" lengthAdjust="spacingAndGlyphs">ENIN</text>
            <text x="2534" y="1026" textLength="166" lengthAdjust="spacingAndGlyphs" class="lg">NIGERIA</text>
            <text x="3309" y="846" textLength="129" lengthAdjust="spacingAndGlyphs">SUDAN</text>
            <text x="3594" y="794" textLength="158" lengthAdjust="spacingAndGlyphs">ERITREA</text>
            <text x="3776" y="946" textLength="62" lengthAdjust="spacingAndGlyphs">DJI</text>
            <text x="3601" y="1005" textLength="190" lengthAdjust="spacingAndGlyphs" class="lg">ETHIOPIA</text>
            <text x="3316" y="1070" textLength="126" lengthAdjust="spacingAndGlyphs">SOUTH</text><text x="3314" y="1105" textLength="130" lengthAdjust="spacingAndGlyphs">SUDAN</text>
            <text x="2954" y="1082" textLength="170" lengthAdjust="spacingAndGlyphs">CENTRAL</text><text x="2957" y="1117" textLength="164" lengthAdjust="spacingAndGlyphs">AFRICAN</text><text x="2949" y="1152" textLength="182" lengthAdjust="spacingAndGlyphs">REPUBLIC</text>
            <text x="2690" y="1202" textLength="217" lengthAdjust="spacingAndGlyphs">CAMEROON</text>
            <text x="2588" y="1293" textLength="236" lengthAdjust="spacingAndGlyphs">EQUATORIAL</text><text x="2634" y="1328" textLength="143" lengthAdjust="spacingAndGlyphs">GUINEA</text>
            <text x="3390" y="1311" textLength="160" lengthAdjust="spacingAndGlyphs">UGANDA</text>
            <text x="3621" y="1313" textLength="136" lengthAdjust="spacingAndGlyphs" class="lg">KENYA</text>
            <text x="2819" y="1391" textLength="134" lengthAdjust="spacingAndGlyphs">OF THE</text><text x="2818" y="1426" textLength="136" lengthAdjust="spacingAndGlyphs">CONGO</text>
            <text x="3499" y="1593" textLength="192" lengthAdjust="spacingAndGlyphs">TANZANIA</text>
            <text x="2876" y="1786" textLength="156" lengthAdjust="spacingAndGlyphs">ANGOLA</text>
            <text x="3460" y="1833" textLength="140" lengthAdjust="spacingAndGlyphs">MALAWI</text>
            <text x="3232" y="1880" textLength="147" lengthAdjust="spacingAndGlyphs">ZAMBIA</text>
            <text x="3279" y="2024" textLength="207" lengthAdjust="spacingAndGlyphs">ZIMBABWE</text>
            <text x="2865" y="2204" textLength="162" lengthAdjust="spacingAndGlyphs">NAMIBIA</text>
            <text x="3094" y="2204" textLength="215" lengthAdjust="spacingAndGlyphs">BOTSWANA</text>
            <text x="3352" y="2335" textLength="178" lengthAdjust="spacingAndGlyphs">ESWATINI</text>
            <text x="3042" y="1432" textLength="266" lengthAdjust="spacingAndGlyphs" class="lg">DEMOCRATIC</text><text x="3042" y="1471" textLength="266" lengthAdjust="spacingAndGlyphs" class="lg">REPUBLIC OF</text><text x="3055" y="1509" textLength="238" lengthAdjust="spacingAndGlyphs" class="lg">THE CONGO</text>
            <g clip-path="url(#tile-edge)"><text x="2795" y="1355" textLength="182" lengthAdjust="spacingAndGlyphs">REPUBLIC</text></g>
          </g>
          <use href="#drc-shape" fill="#58b258" fill-opacity=".5" stroke="#4caf50" stroke-width="9" stroke-linejoin="round"/>
          <g clip-path="url(#dark-half)">
            <rect x="2388" y="566" width="1427" height="1807" fill="#080808"/>
            <use href="#borders" class="lines-dark"/>
            <g class="map-labels dark"><text x="2606" y="731" textLength="115" lengthAdjust="spacingAndGlyphs">NIGER</text></g>
          </g>
        </svg>
        <div class="zoom-ctl"><span class="zoom-in">+</span><span class="zoom-out">−</span></div>
        <div class="layers-ctl"><svg width="82" height="78" viewBox="0 0 82 78" stroke="#1f1f1f" stroke-width="1.5"><path d="M1 51L41 28L81 51L41 77Z" fill="#b8b8b8"/><path d="M1 38L41 15L81 38L41 64Z" fill="#cfcfcf"/><path d="M1 26L41 0L81 26L41 52Z" fill="#9a9a9a"/><path d="M11 32L41 13L71 32L41 51Z" fill="#dedede" stroke="none"/></svg></div>
        <div class="scale">500 km</div>
      </div>
    </div>
  </section>
</main>

<footer class="footer">The sky is the limit © 2020</footer>
</body>
</html>
```
FILE: styles.css
```css
* { box-sizing: border-box; }

/* Every themed surface is split along the window diagonal: dark above, light below. */
:root {
  --split: to bottom right;
}

body {
  margin: 0;
  width: 3960px;
  height: 2475px;
  overflow: hidden;
  display: grid;
  grid-template-columns: 792px 1fr;
  grid-template-rows: 163px 146px 1fr 102px;
  grid-template-areas: "browser browser" "drawer appbar" "drawer content" "footer footer";
  font-family: Roboto, sans-serif;
  color: #fff;
}

h1, h2, ul { margin: 0; padding: 0; font-weight: 400; list-style: none; }
button { border: 0; padding: 0; font-family: inherit; }
svg { display: block; flex: none; }

.browser {
  grid-area: browser;
  display: flex;
  align-items: center;
  height: 161px;
  background: linear-gradient(var(--split), #424242 50%, #f1f1f1 50%) fixed;
  position: relative;
  z-index: 4;
}
.browser::after {
  content: "";
  position: absolute;
  left: 0; right: 0; bottom: -2px;
  height: 2px;
  background: linear-gradient(var(--split), #000 50%, #014c05 50%) fixed;
}
.browser-side { display: flex; align-items: center; height: 100%; }
.browser-left { width: 1181px; padding-left: 64px; padding-bottom: 4px; }
.vline { width: 2px; height: 56px; background: #575757; margin-left: 20px; }
.ico-chevron { margin-left: 16px; }
.ico-back { margin-left: 78px; }
.ico-forward { margin-left: 83px; }
.ico-stop { margin-left: 557px; margin-top: 3px; }
.ico-shield { margin-left: 64px; }
.url {
  width: 1599px;
  height: 87px;
  border: 3px solid #5a5a5a;
  border-radius: 25px;
  display: grid;
  grid-template-columns: 1fr auto 1fr;
  align-items: center;
}
.url-text { grid-column: 2; font: 500 41px/50px Inter, sans-serif; letter-spacing: -1px; padding: 2px 0 0 2px; }
.url-icons { display: flex; align-items: center; justify-content: flex-end; gap: 29px; padding-right: 19px; }
.browser-right { flex: 1; justify-content: flex-end; gap: 69px; padding: 0 59px 5px 0; }

.drawer {
  grid-area: drawer;
  background: linear-gradient(var(--split), #1b1b1b 50%, #034f07 50%) fixed;
  padding-top: 22px;
  position: relative;
}
.drawer::after {
  content: "";
  position: absolute;
  right: 0; top: 0; bottom: 0;
  width: 3px;
  background: linear-gradient(var(--split), rgba(255, 255, 255, .16) 50%, transparent 50%) fixed;
}
.nav-item {
  display: flex;
  align-items: center;
  height: 148.5px;
  padding-left: 49px;
  font-weight: 500;
  font-size: 41px;
  line-height: 50px;
  letter-spacing: -.35px;
}
.nav-item > span:last-child { padding-bottom: 1px; }
.nav-item.active { background: #545454; }
.nav-item svg { fill: #fff; }
.mdi { width: 75.5px; height: 75.5px; }
.mdi + span { margin-left: 98px; }
.fa-slot { min-width: 75.5px; }
.fa-slot + span { margin-left: 98px; }
.nav-links { margin-top: 25px; padding-top: 25px; border-top: 2.5px solid #3b3b3b; }

.appbar {
  grid-area: appbar;
  display: flex;
  align-items: center;
  padding: 0 49px 0 48px;
  background: linear-gradient(var(--split), #23211d 50%, #2e7d32 50%) fixed;
  box-shadow: 0 6px 13px -3px rgba(0, 0, 0, .2), 0 13px 16px rgba(0, 0, 0, .14), 0 3px 32px rgba(0, 0, 0, .12);
  position: relative;
  z-index: 2;
}
.dots { margin-top: -2px; }
.app-title { font-size: 63px; line-height: 80px; letter-spacing: -.55px; margin-left: 99px; flex: 1; }
.lang {
  display: flex;
  align-items: center;
  width: 237px;
  height: 86px;
  margin-top: -2px;
  border-radius: 12px;
  padding-left: 39px;
  gap: 11px;
  background: linear-gradient(var(--split), #272727 50%, #f5f5f5 50%) fixed;
  box-shadow: 0 9px 4px -6px rgba(0, 0, 0, .2), 0 6px 6px rgba(0, 0, 0, .14), 0 3px 16px rgba(0, 0, 0, .12);
  color: #1c1c1c;
}
.lang-text { font-size: 37px; font-weight: 500; letter-spacing: 3px; }
.theme {
  width: 100px;
  height: 100px;
  margin-left: 24px;
  margin-top: -2px;
  border-radius: 50%;
  background: #d0d0d0;
  display: flex;
  align-items: center;
  justify-content: center;
  box-shadow: 0 9px 16px -3px rgba(0, 0, 0, .2), 0 19px 32px rgba(0, 0, 0, .14), 0 3px 50px rgba(0, 0, 0, .12);
}

.content {
  grid-area: content;
  overflow: hidden;
  padding: 87px 109px 0 108px;
  background: linear-gradient(var(--split), #111 50%, #fff 50%) fixed;
}
.card {
  height: 2100px;
  border-radius: 12px;
  padding: 64px 36px 0 62px;
  background: linear-gradient(var(--split), #1e1e1e 50%, #fff 50%) fixed;
  box-shadow: 0 9px 16px -3px rgba(0, 0, 0, .2), 0 16px 32px rgba(0, 0, 0, .14), 0 3px 44px rgba(0, 0, 0, .12);
}
.card-title { font-size: 64.6px; font-weight: 700; line-height: 88px; height: 106px; }
.card-body { display: flex; justify-content: space-between; }
.form { width: 1327px; margin-left: 25px; padding-top: 24px; }
.field-label { display: block; font-size: 38px; line-height: 46px; letter-spacing: -.42px; color: #bcbcbc; }
.field-row { display: flex; align-items: center; border-bottom: 3px solid #c7c7c7; padding-right: 21px; }
.field-value { flex: 1; font-size: 50.5px; line-height: 60px; letter-spacing: -.5px; }
.row-a { height: 76px; padding-bottom: 6px; }
.row-a .caret { margin-top: 16px; }
.row-b { height: 94px; }
.row-b .field-value { padding-bottom: 12px; }
.field-b { margin-top: 64px; }
.clear { margin-right: 50px; }
.select-btn {
  display: block;
  width: 374px;
  height: 112px;
  margin-top: 65px;
  border-radius: 12px;
  background: #b1842d;
  color: #fff;
  font-size: 44px;
  font-weight: 500;
  letter-spacing: 3.3px;
  box-shadow: 0 9px 4px -6px rgba(0, 0, 0, .2), 0 6px 6px rgba(0, 0, 0, .14), 0 3px 16px rgba(0, 0, 0, .12);
}
.alert {
  display: flex;
  align-items: flex-start;
  height: 223px;
  margin-top: 61px;
  padding: 48px 49px;
  border-radius: 12px;
  background: linear-gradient(var(--split), #232920 50%, #eaf4e8 50%) fixed;
  color: #3e842c;
}
.alert-text { font-size: 50.5px; line-height: 74px; letter-spacing: -.5px; margin-left: 48px; }

.map { position: relative; width: 1427px; height: 1807px; }
.country { stroke-width: 4px; }
.province { stroke-width: 3px; }
.country path, .province path, .rivers path { vector-effect: non-scaling-stroke; }
.lines-light { stroke: #f0dfe2; }
.province { opacity: .65; }
.lines-dark { stroke: #202020; }
.water { fill: #d4dadc; }
.rivers { stroke: #e3e9eb; stroke-width: 4px; }
.map-labels { font-family: Inter, sans-serif; font-weight: 700; font-size: 32.5px; fill: #98a5b0; }
.map-labels .lg { font-size: 34.5px; }
.halo { stroke: #fafaf8; stroke-width: 6px; paint-order: stroke; stroke-linejoin: round; }
.map-labels.dark { fill: #3a3a3a; }
.zoom-ctl {
  position: absolute;
  left: 1290px;
  top: 31px;
  width: 105px;
  height: 198px;
  border: 6px solid rgba(0, 0, 0, .2);
  border-radius: 13px;
  display: grid;
  grid-template-rows: 93px 1fr;
  text-align: center;
  color: #1976d2;
  font: 700 70px/108px "Liberation Mono", monospace;
}
.zoom-in { height: 93px; border-bottom: 3px solid #4a4a4a; }
.zoom-out { font-size: 52px; line-height: 102px; height: 92px; }
.layers-ctl {
  position: absolute;
  left: 1248px;
  top: 260px;
  width: 147px;
  height: 148px;
  border: 6px solid rgba(0, 0, 0, .2);
  border-radius: 14px;
  background: #1f1f1f padding-box;
  display: grid;
  place-items: center;
}
.scale {
  position: absolute;
  left: 15px;
  top: 1748px;
  width: 159px;
  height: 43px;
  border: 6px solid #777;
  border-top: 0;
  background: rgba(255, 255, 255, .5);
  color: #333;
  font: 34.7px/38px "Liberation Sans", sans-serif;
}

.footer {
  grid-area: footer;
  position: relative;
  z-index: 3;
  padding-left: 50px;
  font-size: 44px;
  line-height: 100px;
  letter-spacing: -.38px;
  background: linear-gradient(var(--split), #23211d 50%, #2e7d32 50%) fixed;
}
```
